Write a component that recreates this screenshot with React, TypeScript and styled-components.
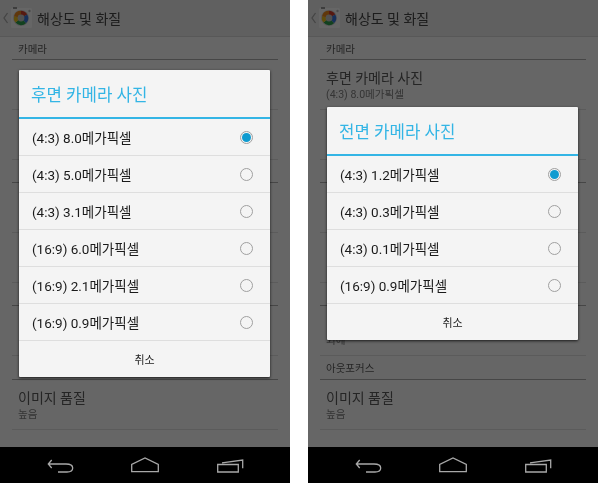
import React from 'react';
import styled, { createGlobalStyle } from 'styled-components';

const GlobalStyle = createGlobalStyle`
	html, body {
		margin: 0;
		background: #fff;
	}
	* {
		box-sizing: border-box;
	}
`;

const FONT = `Roboto, "Noto Sans CJK KR", sans-serif`;

const Page = styled.div`
	display: flex;
	gap: 18px;
	width: 598px;
	height: 483px;
	font-family: ${FONT};
	overflow: hidden;
`;

const Phone = styled.div`
	display: flex;
	flex-direction: column;
	width: 290px;
	height: 483px;
	filter: blur(0.3px);
`;

const Screen = styled.div`
	position: relative;
	height: 447px;
	background: #fff;
	overflow: hidden;
`;

const ActionBar = styled.div`
	display: flex;
	align-items: center;
	height: 37px;
	padding-left: 2px;
	background: #f0f0f0;
	border-bottom: 1px solid #dcdcdc;
`;

const ActionTitle = styled.span`
	margin-left: 2px;
	font-size: 14px;
	color: #464646;
`;

const SectionHead = styled.div<{ $h: number }>`
	display: flex;
	align-items: center;
	height: ${(p) => p.$h}px;
	margin: 0 12px;
	padding-left: 6px;
	font-size: 10.5px;
	color: #5c5c5c;
	border-bottom: 1px solid #b0b0b0;
`;

const Row = styled.div`
	display: flex;
	flex-direction: column;
	justify-content: center;
	height: 50px;
	margin: 0 12px;
	padding-left: 6px;
	border-bottom: 1px solid #e4e4e4;
`;

const RowTitle = styled.div`
	min-height: 20px;
	font-size: 14px;
	line-height: 20px;
	color: #5c5c5c;
`;

const RowSub = styled.div`
	font-size: 10.6px;
	line-height: 14px;
	color: #848484;
`;

const Scrim = styled.div`
	position: absolute;
	inset: 0;
	display: flex;
	align-items: center;
	justify-content: center;
	padding-right: 1px;
	background: rgba(0, 0, 0, 0.6);
`;

const Dialog = styled.div`
	width: 251px;
	background: #f4f4f4;
	border-radius: 1px;
	box-shadow: 0 1px 3px rgba(0, 0, 0, 0.75);
`;

const DialogTitle = styled.div`
	display: flex;
	align-items: center;
	height: 49px;
	padding-left: 12px;
	font-size: 16.8px;
	color: #33b5e5;
	border-bottom: 2px solid #33b5e5;
`;

const Option = styled.div`
	display: flex;
	align-items: center;
	justify-content: space-between;
	height: 37px;
	padding: 0 17px 0 13px;
	font-size: 13.5px;
	color: #1a1a1a;
	border-bottom: 1px solid #dedede;
`;

const Radio = styled.span<{ $on: boolean }>`
	display: flex;
	align-items: center;
	justify-content: center;
	width: 13px;
	height: 13px;
	border: 1px solid #a0a0a0;
	border-radius: 50%;

	&::after {
		content: '';
		width: 9px;
		height: 9px;
		border-radius: 50%;
		background: ${(p) => (p.$on ? '#0f9bd0' : 'transparent')};
	}
`;

const CancelButton = styled.div`
	display: flex;
	align-items: center;
	justify-content: center;
	height: 36px;
	font-size: 11px;
	color: #222;
`;

const NavBar = styled.div`
	display: flex;
	align-items: center;
	justify-content: center;
	flex: 1;
	background: #000;
`;

const NavSlot = styled.div`
	display: flex;
	justify-content: center;
	width: 85px;
`;

const NavIcon = styled.svg`
	width: 32px;
	height: 20px;
	fill: none;
	stroke: #a8a8a8;
	stroke-width: 1.3;
`;

const AppIcon: React.FC = () => (
	<svg width="33" height="24" viewBox="0 0 33 24">
		<path d="M5.5 7 L2 12 L5.5 17" fill="none" stroke="#aaa" strokeWidth="1.3" />
		<rect x="9" y="2" width="21" height="20" rx="1.5" fill="#fff" />
		<rect x="11" y="1" width="4" height="2" fill="#999" />
		<circle cx="19" cy="12" r="8" fill="#ddd" />
		<path d="M19 12 L19 4.8 A7.2 7.2 0 0 1 25.2 8.4 Z" fill="#d8402c" />
		<path d="M19 12 L25.2 8.4 A7.2 7.2 0 0 1 24 17.2 Z" fill="#3b78e0" />
		<path d="M19 12 L24 17.2 A7.2 7.2 0 0 1 13.5 16.6 Z" fill="#2da44e" />
		<path d="M19 12 L13.5 16.6 A7.2 7.2 0 0 1 12 10.2 Z" fill="#f2c21c" />
		<path d="M19 12 L12 10.2 A7.2 7.2 0 0 1 19 4.8 Z" fill="#f08a1c" />
		<circle cx="19" cy="12" r="3.4" fill="#c8c8c8" />
		<circle cx="27.5" cy="5" r="1.2" fill="#bbb" />
	</svg>
);

const BackIcon: React.FC = () => (
	<NavIcon viewBox="0 0 32 20">
		<path d="M7.7 5 L4.3 9 L7.7 13 M4.3 9 H22 C26 9 28.7 10.3 28.7 13 C28.7 15.7 26 17 23 17 H14" />
	</NavIcon>
);

const HomeIcon: React.FC = () => (
	<NavIcon viewBox="0 0 32 20">
		<path d="M2.7 16.7 V9.3 L16 3 L29.3 9.3 V16.7 Z" />
	</NavIcon>
);

const RecentIcon: React.FC = () => (
	<NavIcon viewBox="0 0 32 20">
		<path d="M3.7 9.5 H24.3 V17 H3.7 Z M8 7.8 L28.7 5 V13.3" />
	</NavIcon>
);

interface ScreenshotProps {
	title: string;
	options: string[];
	// the shorter dialog leaves more of the list behind it visible
	shortDialog?: boolean;
}

const Screenshot: React.FC<ScreenshotProps> = ({ title, options, shortDialog }) => (
	<Phone>
		<Screen>
			<ActionBar>
				<AppIcon />
				<ActionTitle>해상도 및 화질</ActionTitle>
			</ActionBar>
			<SectionHead $h={23}>카메라</SectionHead>
			<Row>
				{shortDialog && (
					<>
						<RowTitle>후면 카메라 사진</RowTitle>
						<RowSub>(4:3) 8.0메가픽셀</RowSub>
					</>
				)}
			</Row>
			<Row />
			<SectionHead $h={23} />
			<Row />
			<Row />
			<SectionHead $h={23} />
			<Row>
				{shortDialog && (
					<>
						<RowTitle />
						<RowSub>외에</RowSub>
					</>
				)}
			</Row>
			<SectionHead $h={24}>{shortDialog && '아웃포커스'}</SectionHead>
			<Row>
				<RowTitle>이미지 품질</RowTitle>
				<RowSub>높음</RowSub>
			</Row>
			<Scrim>
				<Dialog>
					<DialogTitle>{title}</DialogTitle>
					{options.map((option, i) => (
						<Option key={option}>
							{option}
							<Radio $on={i === 0} />
						</Option>
					))}
					<CancelButton>취소</CancelButton>
				</Dialog>
			</Scrim>
		</Screen>
		<NavBar>
			<NavSlot>
				<BackIcon />
			</NavSlot>
			<NavSlot>
				<HomeIcon />
			</NavSlot>
			<NavSlot>
				<RecentIcon />
			</NavSlot>
		</NavBar>
	</Phone>
);

const REAR = [
	'(4:3) 8.0메가픽셀',
	'(4:3) 5.0메가픽셀',
	'(4:3) 3.1메가픽셀',
	'(16:9) 6.0메가픽셀',
	'(16:9) 2.1메가픽셀',
	'(16:9) 0.9메가픽셀',
];

const FRONT = ['(4:3) 1.2메가픽셀', '(4:3) 0.3메가픽셀', '(4:3) 0.1메가픽셀', '(16:9) 0.9메가픽셀'];

export default function App() {
	return (
		<>
			<GlobalStyle />
			<Page>
				<Screenshot title="후면 카메라 사진" options={REAR} />
				<Screenshot title="전면 카메라 사진" options={FRONT} shortDialog />
			</Page>
		</>
	);
}
